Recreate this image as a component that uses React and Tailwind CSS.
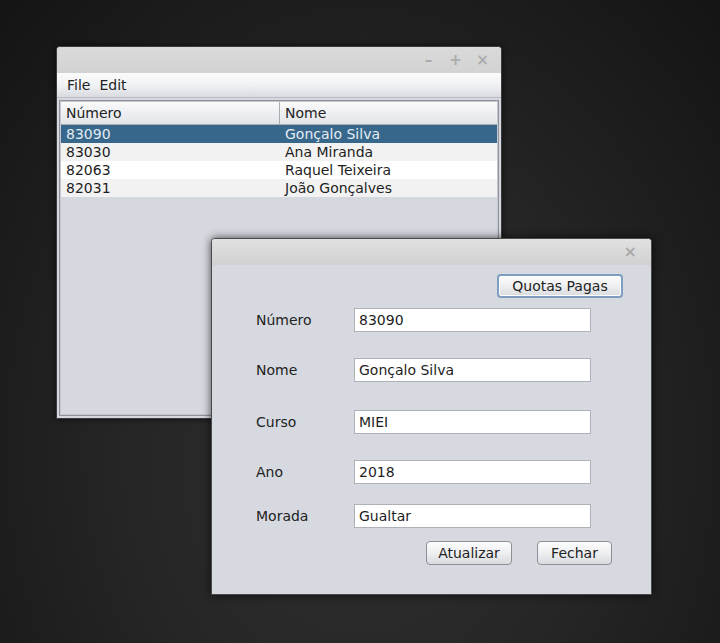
import React from "react";

const rows = [
  { num: "83090", nome: "Gonçalo Silva" },
  { num: "83030", nome: "Ana Miranda" },
  { num: "82063", nome: "Raquel Teixeira" },
  { num: "82031", nome: "João Gonçalves" },
];

const fields = [
  { label: "Número", value: "83090", mt: "mt-[10px]" },
  { label: "Nome", value: "Gonçalo Silva", mt: "mt-[26px]" },
  { label: "Curso", value: "MIEI", mt: "mt-[28px]" },
  { label: "Ano", value: "2018", mt: "mt-[26px]" },
  { label: "Morada", value: "Gualtar", mt: "mt-[20px]" },
];

function rowClass(i) {
  if (i === 0) return "bg-[#37678b] text-[#e4ecf3]";
  if (i % 2 === 1) return "bg-[#f2f2f2] text-[#1e1e1e]";
  return "bg-white text-[#1e1e1e]";
}

function MainWindow() {
  return (
    <div className="absolute left-[56px] top-[46px] w-[446px] h-[373px] flex flex-col rounded-t-[4px] border border-[#3c3c3c] bg-[#d5d8df] shadow-[0_0_6px_rgba(0,0,0,0.6)] overflow-hidden">
      {/* title bar */}
      <div className="h-[26px] shrink-0 bg-gradient-to-b from-[#dadada] to-[#d2d2d2] flex items-center justify-end pr-[12px] gap-[14px] text-[#acacac] text-[15px] font-bold">
        <span className="w-[13px] text-center">–</span>
        <span className="w-[13px] text-center">+</span>
        <span className="w-[13px] text-center">×</span>
      </div>
      {/* menu bar */}
      <div className="h-[25px] shrink-0 bg-gradient-to-b from-[#fbfbfc] via-[#f1f2f4] to-[#d9dbe0] border-b border-[#b8bbc2] flex items-center pl-[10px] gap-[9px] text-[#222]">
        <span>File</span>
        <span>Edit</span>
      </div>
      {/* table */}
      <div className="flex-1 m-[2px] border border-[#8f9298] flex flex-col">
        <div className="flex-1 border border-[#c4c7cd] flex flex-col">
          <div className="h-[23px] flex bg-gradient-to-b from-[#fafafb] to-[#e2e4e8] border-b border-[#a9acb2] text-[#222]">
            <div className="w-[219px] border-r border-[#a9acb2] flex items-center pl-[5px]">Número</div>
            <div className="flex-1 flex items-center pl-[5px]">Nome</div>
          </div>
          {rows.map((r, i) => (
            <div key={r.num} className={"h-[18px] flex items-center leading-[18px] " + rowClass(i)}>
              <div className="w-[219px] pl-[5px]">{r.num}</div>
              <div className="flex-1 pl-[5px]">{r.nome}</div>
            </div>
          ))}
        </div>
      </div>
    </div>
  );
}

function Button({ children, className = "", focused = false }) {
  return (
    <div
      className={
        "h-[24px] flex items-center justify-center rounded-[4px] bg-gradient-to-b from-[#fdfdfd] via-[#eeeff1] to-[#d9dbdf] text-[#222] " +
        (focused
          ? "border-2 border-[#7f9dbf] shadow-[inset_0_0_0_1px_#ffffff] "
          : "border border-[#8d9097] ") +
        className
      }
    >
      {children}
    </div>
  );
}

function Dialog() {
  return (
    <div className="absolute left-[211px] top-[238px] w-[441px] h-[357px] flex flex-col rounded-t-[4px] border border-[#4a4a4a] bg-[#d6d9e0] shadow-[0_0_9px_rgba(0,0,0,0.7)] overflow-hidden">
      <div className="h-[26px] shrink-0 bg-gradient-to-b from-[#e1e1e1] to-[#d1d1d1] flex items-center justify-end pr-[14px] text-[#a9a9a9] text-[16px] font-bold">
        <span>×</span>
      </div>
      <div className="flex-1 flex flex-col">
        <div className="flex justify-end pr-[28px] mt-[9px]">
          <Button focused className="w-[126px]">Quotas Pagas</Button>
        </div>
        {fields.map((f) => (
          <div key={f.label} className={"flex items-center pl-[44px] " + f.mt}>
            <div className="w-[98px] leading-[18px] text-[#222]">{f.label}</div>
            <div className="w-[237px] h-[24px] bg-white border border-[#aeb1b7] flex items-center pl-[4px] text-[#1e1e1e]">
              {f.value}
            </div>
          </div>
        ))}
        <div className="flex justify-end pr-[39px] mt-[13px] gap-[25px]">
          <Button className="w-[86px]">Atualizar</Button>
          <Button className="w-[75px]">Fechar</Button>
        </div>
      </div>
    </div>
  );
}

export default function App() {
  return (
    <div className="relative w-[720px] h-[643px] overflow-hidden bg-[radial-gradient(ellipse_at_50%_70%,_#2f2f2f_0%,_#262626_45%,_#141414_100%)] font-['DejaVu_Sans',sans-serif] text-[14px]">
      <MainWindow />
      <Dialog />
    </div>
  );
}
